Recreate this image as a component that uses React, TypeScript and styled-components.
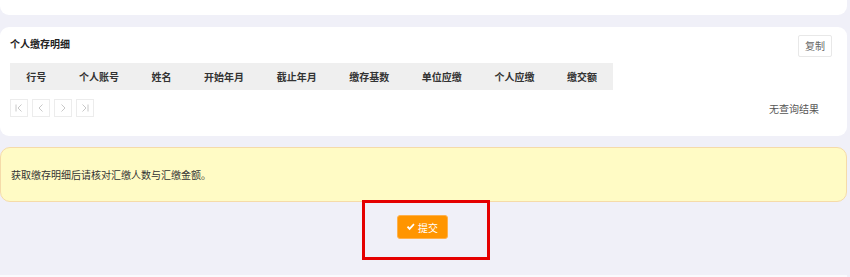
import styled, { createGlobalStyle } from "styled-components";

const GlobalStyle = createGlobalStyle`
    html, body {
        margin: 0;
        padding: 0;
        background: #f0f0f8;
        font-family: "Noto Sans CJK SC", "Noto Sans", sans-serif;
        color: #333;
    }
`;

const Page = styled.div`
    position: relative;
    width: 847px;
    height: 277px;
    overflow: hidden;
    display: flex;
    flex-direction: column;
`;

const TopCard = styled.div`
    height: 15px;
    background: #fff;
    border-radius: 0 0 9px 9px;
`;

const Card = styled.section`
    margin-top: 12px;
    height: 109px;
    box-sizing: border-box;
    background: #fff;
    border-radius: 9px;
    padding: 8px 15px 0 10px;
`;

const TitleRow = styled.div`
    display: flex;
    justify-content: space-between;
    align-items: flex-start;
    height: 22px;
`;

const Title = styled.h3`
    margin: 0;
    font-size: 10px;
    line-height: 18px;
    font-weight: 700;
    color: #222;
`;

const GhostButton = styled.button`
    width: 34px;
    height: 22px;
    padding: 0;
    box-sizing: border-box;
    border: 1px solid #e8e8e8;
    border-radius: 2px;
    background: #fff;
    color: #666;
    font-family: inherit;
    font-size: 10px;
    line-height: 20px;
`;

const Table = styled.table`
    margin-top: 6px;
    border-collapse: collapse;
`;

const HeadCell = styled.th`
    height: 27px;
    padding: 0 16.3px;
    background: #efefef;
    font-size: 10px;
    font-weight: 700;
    color: #333;
    white-space: nowrap;
`;

const PagerRow = styled.div`
    margin-top: 9px;
    display: flex;
    align-items: center;
    justify-content: space-between;
`;

const Pager = styled.div`
    display: flex;
    gap: 4px;
`;

const PageButton = styled.span`
    width: 18px;
    height: 18px;
    box-sizing: border-box;
    border: 1px solid #ececec;
    display: flex;
    align-items: center;
    justify-content: center;
`;

const Empty = styled.span`
    margin-right: 13px;
    font-size: 10px;
    color: #555;
`;

const Notice = styled.div`
    margin-top: 11px;
    height: 55px;
    box-sizing: border-box;
    background: #fffbc5;
    border: 1px solid #f5dba9;
    border-radius: 10px;
    padding-left: 10px;
    display: flex;
    align-items: center;
    font-size: 10px;
    color: #333;
`;

const Actions = styled.div`
    margin-top: 13px;
    display: flex;
    justify-content: center;
    padding-right: 3px;
`;

const SubmitButton = styled.button`
    width: 51px;
    height: 24px;
    box-sizing: border-box;
    border: 1px solid #ffb14d;
    border-radius: 3px;
    background: #ff9500;
    color: #fff;
    font-family: inherit;
    font-size: 10px;
    display: flex;
    align-items: center;
    justify-content: center;
    gap: 3px;
    padding: 0;
`;

const Highlight = styled.div`
    position: absolute;
    left: 362px;
    top: 200px;
    width: 128px;
    height: 60px;
    box-sizing: border-box;
    border: 3px solid #e50000;
    pointer-events: none;
`;

const BottomEdge = styled.div`
    position: absolute;
    left: 0;
    right: 0;
    bottom: 0;
    height: 2px;
    background: #fafafd;
`;

const columns = ["行号", "个人账号", "姓名", "开始年月", "截止年月", "缴存基数", "单位应缴", "个人应缴", "缴交额"];

type PagerIconProps = { kind: "first" | "prev" | "next" | "last" };

function PagerIcon({ kind }: PagerIconProps) {
    const flip = kind === "next" || kind === "last";
    const bar = kind === "first" || kind === "last";
    return (
        <svg width="10" height="10" viewBox="0 0 10 10" style={flip ? { transform: "scaleX(-1)" } : undefined}>
            {bar && <line x1="2" y1="1.5" x2="2" y2="8.5" stroke="#c8c8c8" strokeWidth="1" />}
            <polyline
                points={bar ? "7.5,1.5 4,5 7.5,8.5" : "6.5,1.5 3,5 6.5,8.5"}
                fill="none"
                stroke="#c8c8c8"
                strokeWidth="1"
            />
        </svg>
    );
}

function CheckIcon() {
    return (
        <svg width="9" height="8" viewBox="0 0 9 8">
            <path d="M0.8 4.3 L2.2 3 L3.6 4.6 L7.4 0.6 L8.6 1.8 L3.6 7.2 Z" fill="#fff" />
        </svg>
    );
}

export default function App() {
    return (
        <>
            <GlobalStyle />
            <Page>
                <TopCard />
                <Card>
                    <TitleRow>
                        <Title>个人缴存明细</Title>
                        <GhostButton>复制</GhostButton>
                    </TitleRow>
                    <Table>
                        <thead>
                            <tr>
                                {columns.map((c) => (
                                    <HeadCell key={c}>{c}</HeadCell>
                                ))}
                            </tr>
                        </thead>
                    </Table>
                    <PagerRow>
                        <Pager>
                            <PageButton><PagerIcon kind="first" /></PageButton>
                            <PageButton><PagerIcon kind="prev" /></PageButton>
                            <PageButton><PagerIcon kind="next" /></PageButton>
                            <PageButton><PagerIcon kind="last" /></PageButton>
                        </Pager>
                        <Empty>无查询结果</Empty>
                    </PagerRow>
                </Card>
                <Notice>获取缴存明细后请核对汇缴人数与汇缴金额。</Notice>
                <Actions>
                    <SubmitButton>
                        <CheckIcon />
                        提交
                    </SubmitButton>
                </Actions>
                <Highlight />
                <BottomEdge />
            </Page>
        </>
    );
}
